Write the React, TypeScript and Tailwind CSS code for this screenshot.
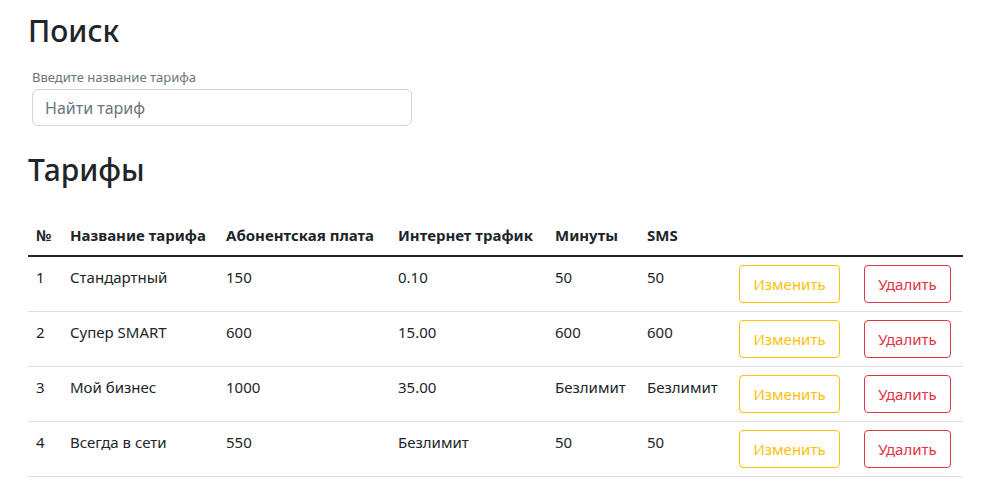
const tariffs = [
  { id: 1, name: 'Стандартный', fee: '150', traffic: '0.10', minutes: '50', sms: '50' },
  { id: 2, name: 'Супер SMART', fee: '600', traffic: '15.00', minutes: '600', sms: '600' },
  { id: 3, name: 'Мой бизнес', fee: '1000', traffic: '35.00', minutes: 'Безлимит', sms: 'Безлимит' },
  { id: 4, name: 'Всегда в сети', fee: '550', traffic: 'Безлимит', minutes: '50', sms: '50' },
]

export default function App() {
  return (
    <div className="min-h-screen bg-white px-[28px] pt-[12px] text-[#212529] font-['Noto_Sans',sans-serif]">
      <h2 className="text-[30px] font-medium leading-[38px]">Поиск</h2>

      <div className="mt-[17px] px-[4px] w-[388px]">
        <label className="block text-[13px] leading-[20px] text-[#6c757d] mb-[2px]">Введите название тарифа</label>
        <input
          type="text"
          placeholder="Найти тариф"
          className="block w-[380px] h-[37px] px-[12px] text-[16px] border border-[#ced4da] rounded-[6px] outline-none placeholder:text-[#6c757d] text-[#212529]"
        />
      </div>

      <h2 className="mt-[25px] text-[30px] font-medium leading-[38px]">Тарифы</h2>

      <table className="mt-[26px] w-[935px] table-fixed border-collapse text-[15px] leading-[24px]">
        <thead>
          <tr className="border-b-2 border-[#212529]">
            <th className="w-[34px] p-[8px] text-left font-bold">№</th>
            <th className="w-[156px] p-[8px] text-left font-bold">Название тарифа</th>
            <th className="w-[172px] p-[8px] text-left font-bold">Абонентская плата</th>
            <th className="w-[157px] p-[8px] text-left font-bold">Интернет трафик</th>
            <th className="w-[92px] p-[8px] text-left font-bold">Минуты</th>
            <th className="w-[92px] p-[8px] text-left font-bold">SMS</th>
            <th className="w-[125px] p-[8px]"></th>
            <th className="w-[107px] p-[8px]"></th>
          </tr>
        </thead>
        <tbody>
          {tariffs.map(t => (
            <tr key={t.id} className="border-b border-[#dee2e6] align-top">
              <td className="p-[8px]">{t.id}</td>
              <td className="p-[8px] whitespace-nowrap">{t.name}</td>
              <td className="p-[8px]">{t.fee}</td>
              <td className="p-[8px]">{t.traffic}</td>
              <td className="p-[8px] whitespace-nowrap">{t.minutes}</td>
              <td className="p-[8px] whitespace-nowrap">{t.sms}</td>
              <td className="p-[8px]">
                <button className="h-[38px] w-[101px] rounded-[4px] border border-[#ffc107] text-[15px] text-[#ffc107]">
                  Изменить
                </button>
              </td>
              <td className="p-[8px]">
                <button className="h-[38px] w-[87px] rounded-[4px] border border-[#dc3545] text-[15px] text-[#dc3545]">
                  Удалить
                </button>
              </td>
            </tr>
          ))}
        </tbody>
      </table>
    </div>
  )
}
